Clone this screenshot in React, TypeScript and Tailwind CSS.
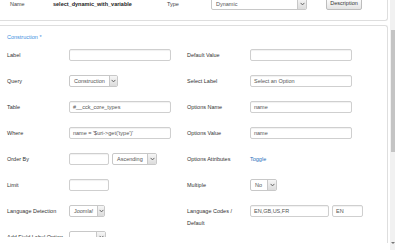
const Chevron = () => (
  <svg width="5" height="4" viewBox="0 0 5 4" className="block">
    <path d="M0.6 0.9 L2.5 2.9 L4.4 0.9" fill="none" stroke="#555" strokeWidth="0.9" />
  </svg>
)

type FieldProps = { value?: string; className?: string }

const TextInput = ({ value = '', className = '' }: FieldProps) => (
  <div
    className={`h-[12px] border border-[#cfcfcf] rounded-[2px] bg-white px-[3px] leading-[10px] text-[#555] shadow-[inset_0_1px_1px_rgba(0,0,0,0.06)] whitespace-nowrap overflow-hidden ${className}`}
  >
    {value}
  </div>
)

const SelectBox = ({ value = '', className = '' }: FieldProps) => (
  <div
    className={`h-[12px] flex border border-[#c8c8c8] rounded-[2px] bg-white text-[#555] whitespace-nowrap overflow-hidden ${className}`}
  >
    <div className="flex-1 px-[4px] leading-[10px]">{value}</div>
    <div className="w-[9px] flex items-center justify-center border-l border-[#c8c8c8] bg-gradient-to-b from-[#f6f6f6] to-[#dcdcdc]">
      <Chevron />
    </div>
  </div>
)

type Row = {
  label: string
  field: React.ReactNode
  rLabel?: React.ReactNode
  rField?: React.ReactNode
}

const rows: Row[] = [
  { label: 'Label', field: <TextInput className="w-[102px]" />, rLabel: 'Default Value', rField: <TextInput className="w-[102px]" /> },
  { label: 'Query', field: <SelectBox value="Construction" className="w-[49px]" />, rLabel: 'Select Label', rField: <TextInput value="Select an Option" className="w-[102px]" /> },
  { label: 'Table', field: <TextInput value="#__cck_core_types" className="w-[102px]" />, rLabel: 'Options Name', rField: <TextInput value="name" className="w-[102px]" /> },
  { label: 'Where', field: <TextInput value="name = '$uri->get('type')'" className="w-[102px]" />, rLabel: 'Options Value', rField: <TextInput value="name" className="w-[102px]" /> },
  {
    label: 'Order By',
    field: (
      <div className="flex gap-[3px]">
        <TextInput className="w-[40px]" />
        <SelectBox value="Ascending" className="w-[45px]" />
      </div>
    ),
    rLabel: 'Options Attributes',
    rField: <span className="text-[#2a6ebb] leading-[12px]">Toggle</span>,
  },
  { label: 'Limit', field: <TextInput className="w-[40px]" />, rLabel: 'Multiple', rField: <SelectBox value="No" className="w-[27px]" /> },
  {
    label: 'Language Detection',
    field: <SelectBox value="Joomla!" className="w-[36px]" />,
    rLabel: (
      <span>
        Language Codes /<br />Default
      </span>
    ),
    rField: (
      <div className="flex gap-[3px]">
        <TextInput value="EN,GB,US,FR" className="w-[79px]" />
        <TextInput value="EN" className="w-[31px]" />
      </div>
    ),
  },
  { label: 'Add Field Label Option', field: <SelectBox className="w-[37px]" /> },
]

export default function App() {
  return (
    <div className="flex w-[395px] h-[250px] overflow-hidden bg-white font-['Liberation_Sans',Arial,sans-serif] text-[5.5px] text-[#333]">
      <div className="flex-1 flex flex-col">
        <div className="h-[21px] mr-[2px] border-r border-b border-[#dedede] rounded-br-[3px] bg-white">
          <div className="flex items-center h-[12px] -mt-[2px]">
            <div className="pl-[10px] w-[53px] text-[#444]">Name</div>
            <div className="w-[114px] font-bold text-[#222]">select_dynamic_with_variable</div>
            <div className="w-[44px] text-[#444]">Type</div>
            <SelectBox value="Dynamic" className="w-[96px]" />
            <div className="ml-[19px] w-[36px] h-[12px] -mt-[1px] border border-[#bdbdbd] rounded-[2px] bg-gradient-to-b from-[#fdfdfd] to-[#e4e4e4] flex items-center justify-center text-[#333]">
              Description
            </div>
          </div>
        </div>
        <div className="mt-[4px] mr-[2px] h-[218px] border-t border-r border-[#dedede] rounded-tr-[3px] overflow-hidden">
          <div className="pt-[5px] pl-[7px] h-[17px] leading-[12px] text-[#3d8fe0]">Construction *</div>
          <div className="mt-[6px] h-[188px] overflow-hidden flex flex-col gap-[14px]">
            {rows.map((row, i) => (
              <div key={i} className="flex h-[12px] shrink-0">
                <div className="w-[69px] pl-[7px] leading-[12px] whitespace-nowrap">{row.label}</div>
                <div className="w-[118px]">{row.field}</div>
                <div className="w-[63px] leading-[12px] whitespace-nowrap">{row.rLabel}</div>
                <div>{row.rField}</div>
              </div>
            ))}
          </div>
        </div>
      </div>
      <div className="w-[5px] h-full bg-[#f1f1f1] flex flex-col items-center">
        <div className="mt-[30px] w-[4px] h-[122px] bg-[#c4c4c4]" />
        <div className="flex-1" />
        <div className="mb-[6px] w-0 h-0 border-l-[2px] border-r-[2px] border-t-[2px] border-l-transparent border-r-transparent border-t-[#777]" />
      </div>
    </div>
  )
}
